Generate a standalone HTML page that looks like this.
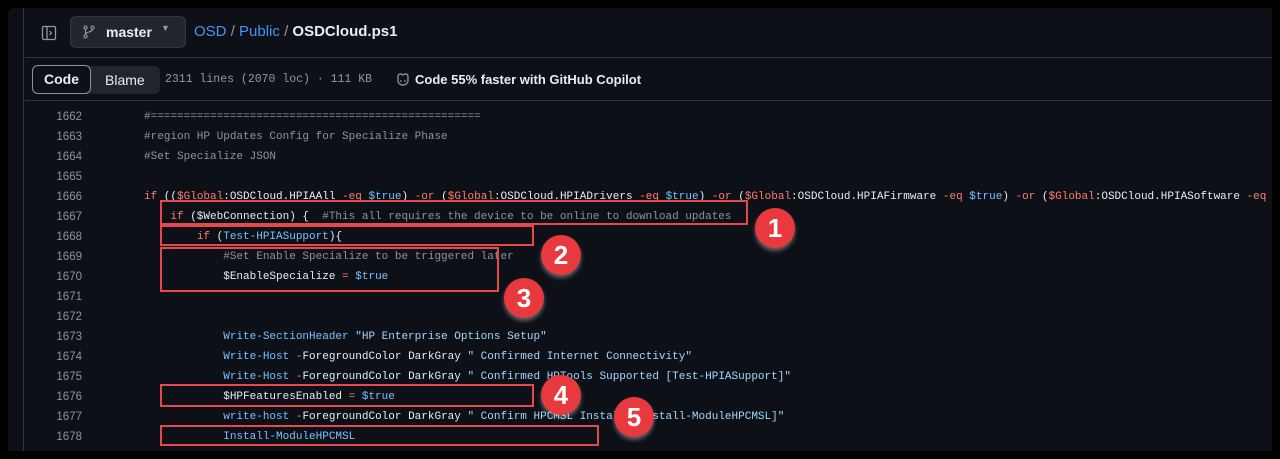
<!DOCTYPE html>
<html><head><meta charset="utf-8"><style>
*{margin:0;padding:0;box-sizing:border-box}
body{width:1280px;height:459px;background:#000;position:relative;overflow:hidden;font-family:"Liberation Sans",sans-serif}
.panel{position:absolute;left:8px;top:8px;width:1264px;height:443px;background:#0d1117;border-radius:6px 0 0 0;overflow:hidden}
.strip{position:absolute;left:0;top:0;width:16px;height:443px;background:#0d1117;border-right:1px solid #30363d}
.top{position:absolute;left:17px;top:0;right:0;height:50px;border-bottom:1px solid #30363d}
.tb{position:absolute;left:17px;top:50px;right:0;height:43px;border-bottom:1px solid #30363d}
.abs{position:absolute}
.code{position:absolute;left:0;top:103px;font-family:"Liberation Mono",monospace;font-size:11px;color:#e6edf3;white-space:pre}
.ln{position:absolute;width:74px;text-align:right;color:#8b949e;font-family:"Liberation Sans",sans-serif;font-size:11.5px}
.l{position:absolute;left:136px}
.k{color:#ff7b72}.c{color:#8b949e}.v{color:#79c0ff}.s{color:#a5d6ff}.f{color:#79c0ff}
.box{position:absolute;border:2px solid #e5484d}
.num{position:absolute;width:40px;height:40px;border-radius:50%;background:#e8393f;color:#fff;font:bold 26px "Liberation Sans",sans-serif;text-align:center;line-height:40px;box-shadow:0 3px 4px rgba(255,255,255,.35)}
</style></head><body>
<div class="panel">
<div class="strip"></div>
<div class="top"></div>
<div class="tb"></div>
<svg class="abs" style="left:33px;top:17px" width="16" height="16" viewBox="0 0 16 16"><rect x="1.5" y="1.5" width="13" height="13" rx="1.5" fill="none" stroke="#9198a1" stroke-width="1.3"/><line x1="6" y1="2" x2="6" y2="14" stroke="#9198a1" stroke-width="1.3"/><path d="M8.5 6l2 2-2 2" fill="none" stroke="#9198a1" stroke-width="1.2"/></svg>
<div class="abs" style="left:62px;top:8px;width:116px;height:32px;background:#21262d;border-radius:6px;border:1px solid #30363d"></div>
<svg class="abs" style="left:74px;top:17px" width="14" height="14" viewBox="0 0 16 16"><circle cx="4" cy="3" r="1.8" fill="none" stroke="#9198a1" stroke-width="1.3"/><circle cx="12" cy="3" r="1.8" fill="none" stroke="#9198a1" stroke-width="1.3"/><circle cx="4" cy="13" r="1.8" fill="none" stroke="#9198a1" stroke-width="1.3"/><path d="M4 5v6M12 5c0 4-8 2-8 6" fill="none" stroke="#9198a1" stroke-width="1.3"/></svg>
<div class="abs" style="left:98px;top:16px;color:#e6edf3;font-size:14px;font-weight:bold">master</div>
<div class="abs" style="left:153px;top:15px;color:#9198a1;font-size:9px">▼</div>
<div class="abs" style="left:186px;top:15px;font-size:15px;color:#4493f8">OSD <span style="color:#9198a1">/</span> Public <span style="color:#9198a1">/</span> <b style="color:#e6edf3">OSDCloud.ps1</b></div>
<div class="abs" style="left:24px;top:58px;width:128px;height:28px;background:#21262d;border-radius:6px"></div>
<div class="abs" style="left:24px;top:57px;width:59px;height:29px;background:#0d1117;border:1px solid #8b949e;border-radius:6px;color:#e6edf3;font-size:14px;font-weight:bold;text-align:center;line-height:27px">Code</div>
<div class="abs" style="left:97px;top:64px;color:#e6edf3;font-size:14px">Blame</div>
<div class="abs" style="left:157px;top:65px;color:#9198a1;font:11.5px 'Liberation Mono',monospace">2311 lines (2070 loc) · 111 KB</div>
<svg class="abs" style="left:387px;top:63px" width="16" height="16" viewBox="0 0 16 16"><path d="M3 6c0-3 2-4 5-2 3-2 5-1 5 2v4c0 2-2 4-5 4s-5-2-5-4z" fill="none" stroke="#9198a1" stroke-width="1.3"/><circle cx="6" cy="10" r=".9" fill="#9198a1"/><circle cx="10" cy="10" r=".9" fill="#9198a1"/></svg>
<div class="abs" style="left:407px;top:64px;color:#e6edf3;font-size:13px;font-weight:bold">Code 55% faster with GitHub Copilot</div>

<div class="code">
<div class="ln" style="top:0">1662</div><div class="l c" style="top:0">#==================================================</div>
<div class="ln" style="top:20px">1663</div><div class="l c" style="top:20px">#region HP Updates Config for Specialize Phase</div>
<div class="ln" style="top:40px">1664</div><div class="l c" style="top:40px">#Set Specialize JSON</div>
<div class="ln" style="top:60px">1665</div>
<div class="ln" style="top:80px">1666</div><div class="l" style="top:80px"><span class="k">if</span> ((<span class="k">$Global</span>:OSDCloud.HPIAAll <span class="k">-eq</span> <span class="v">$true</span>) <span class="k">-or</span> (<span class="k">$Global</span>:OSDCloud.HPIADrivers <span class="k">-eq</span> <span class="v">$true</span>) <span class="k">-or</span> (<span class="k">$Global</span>:OSDCloud.HPIAFirmware <span class="k">-eq</span> <span class="v">$true</span>) <span class="k">-or</span> (<span class="k">$Global</span>:OSDCloud.HPIASoftware <span class="k">-eq</span></div>
<div class="ln" style="top:100px">1667</div><div class="l" style="top:100px">    <span class="k">if</span> ($WebConnection) {  <span class="c">#This all requires the device to be online to download updates</span></div>
<div class="ln" style="top:120px">1668</div><div class="l" style="top:120px">        <span class="k">if</span> (<span class="f">Test-HPIASupport</span>){</div>
<div class="ln" style="top:140px">1669</div><div class="l" style="top:140px">            <span class="c">#Set Enable Specialize to be triggered later</span></div>
<div class="ln" style="top:160px">1670</div><div class="l" style="top:160px">            $EnableSpecialize <span class="k">=</span> <span class="v">$true</span></div>
<div class="ln" style="top:180px">1671</div>
<div class="ln" style="top:200px">1672</div>
<div class="ln" style="top:220px">1673</div><div class="l" style="top:220px">            <span class="f">Write-SectionHeader</span> <span class="s">"HP Enterprise Options Setup"</span></div>
<div class="ln" style="top:240px">1674</div><div class="l" style="top:240px">            <span class="f">Write-Host</span> <span class="k">-</span>ForegroundColor DarkGray <span class="s">" Confirmed Internet Connectivity"</span></div>
<div class="ln" style="top:260px">1675</div><div class="l" style="top:260px">            <span class="f">Write-Host</span> <span class="k">-</span>ForegroundColor DarkGray <span class="s">" Confirmed HPTools Supported [Test-HPIASupport]"</span></div>
<div class="ln" style="top:280px">1676</div><div class="l" style="top:280px">            $HPFeaturesEnabled <span class="k">=</span> <span class="v">$true</span></div>
<div class="ln" style="top:300px">1677</div><div class="l" style="top:300px">            <span class="f">write-host</span> <span class="k">-</span>ForegroundColor DarkGray <span class="s">" Confirm HPCMSL Install [Install-ModuleHPCMSL]"</span></div>
<div class="ln" style="top:320px">1678</div><div class="l" style="top:320px">            <span class="f">Install-ModuleHPCMSL</span></div>
</div>
</div>
<div class="box" style="left:160px;top:200px;width:588px;height:25px"></div>
<div class="box" style="left:160px;top:225px;width:374px;height:21px"></div>
<div class="box" style="left:160px;top:247px;width:339px;height:45px"></div>
<div class="box" style="left:160px;top:384px;width:374px;height:23px"></div>
<div class="box" style="left:160px;top:425px;width:439px;height:21px"></div>
<div class="num" style="left:755px;top:208px">1</div>
<div class="num" style="left:541px;top:235px">2</div>
<div class="num" style="left:504px;top:278px">3</div>
<div class="num" style="left:541px;top:375px">4</div>
<div class="num" style="left:614px;top:397px">5</div>
</body></html>
